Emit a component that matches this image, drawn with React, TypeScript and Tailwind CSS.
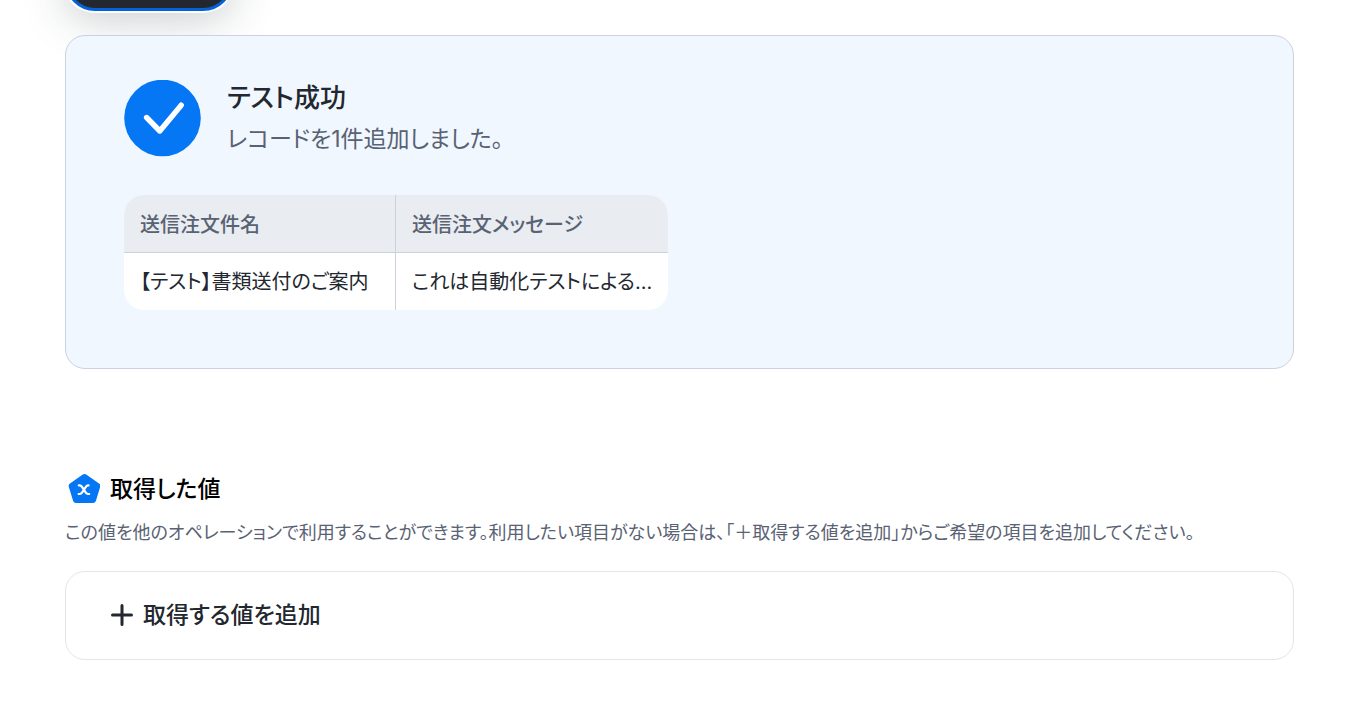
export default function App() {
  return (
    <main className="min-h-screen overflow-hidden bg-white pb-11 pl-[65px] pr-[66px] font-['Inter','Noto_Sans_CJK_JP',sans-serif] text-[#23272f] [font-feature-settings:'palt']">
      <div className="flex h-[35px] items-end pb-6">
        <button type="button" aria-label="テスト" className="h-[60px] w-[168px] shrink-0 rounded-[30px] border-3 border-[#0562d6] bg-[#23272f] shadow-[0_0_0_2px_#fff,0_8px_44px_rgba(35,55,60,0.25)]" />
      </div>
      <section className="relative rounded-[20px] border border-[#cbd2de] bg-[#f0f7ff] px-[58px] pt-11 pb-[58px]">
        <div className="flex items-center gap-[26px]">
          <svg className="size-[77px] shrink-0" viewBox="0 0 77 77" aria-hidden="true">
            <circle cx="38.5" cy="38" r="38.3" fill="#0577f5" />
            <path d="M22.6 37.5 L35.8 51 L57.2 25.2" fill="none" stroke="#fff" strokeWidth="5.4" strokeLinecap="round" strokeLinejoin="round" />
          </svg>
          <div>
            <h2 className="text-[26px] leading-9 font-medium">テスト成功</h2>
            <p className="mt-[5px] text-[23px] leading-9 text-[#596273]">レコードを1件追加しました。</p>
          </div>
        </div>
        <div className="mt-[38px] w-[544px] max-w-full overflow-hidden rounded-[20px] bg-white">
          <table className="w-full table-fixed border-separate border-spacing-0 text-left text-[20px] leading-7">
            <thead className="bg-[#e9ecf1] text-[#596273]">
              <tr>
                <th className="border-r border-b border-[#cbd2de] px-4 pt-4 pb-[13px] font-medium">送信注文件名</th>
                <th className="border-b border-[#cbd2de] px-4 pt-4 pb-[13px] font-medium">送信注文メッセージ</th>
              </tr>
            </thead>
            <tbody>
              <tr>
                <td className="border-r border-[#cbd2de] px-4 pt-[15px] pb-[14px] whitespace-nowrap">【テスト】書類送付のご案内</td>
                <td className="px-4 pt-[15px] pb-[14px] whitespace-nowrap">これは自動化テストによる...</td>
              </tr>
            </tbody>
          </table>
        </div>
      </section>
      <section className="mt-[102px]">
        <div className="flex items-center gap-[10px] pl-[3px]">
          <svg className="size-8" viewBox="0 0 32 32" aria-hidden="true">
            <path d="M16.5 4 L29.3 13 L25 27 H8 L3.7 13 Z" fill="#0577f5" stroke="#0577f5" strokeWidth="6" strokeLinejoin="round" />
            <path d="M10.8 12.4 H11.6 Q13 12.4 13.8 13.7 L17.8 19.7 Q18.6 21 20 21 H21.2 M20.6 12.4 H20.2 Q18.8 12.4 18 13.7 L14 19.700 Q13.200 21 11.800 21 H10.600" fill="none" stroke="#fff" strokeWidth="2.2" strokeLinecap="round" />
          </svg>
          <h2 className="text-[23px] leading-9 font-medium text-black">取得した値</h2>
        </div>
        <p className="mt-3 text-[18px] leading-7 text-[#596273]">この値を他のオペレーションで利用することができます。利用したい項目がない場合は、「＋取得する値を追加」からご希望の項目を追加してください。</p>
        <div className="mt-6 rounded-[20px] border border-[#e3e5e8] px-11 py-[25px]">
          <button type="button" className="flex items-center gap-[9px] text-[23px] leading-[37px] font-medium">
            <svg className="size-6" viewBox="0 0 24 24" aria-hidden="true">
              <path d="M12 1.5 V20.5 M2.5 11 H21.5" fill="none" stroke="currentColor" strokeWidth="3" strokeLinecap="round" />
            </svg>
            取得する値を追加
          </button>
        </div>
      </section>
    </main>
  );
}
